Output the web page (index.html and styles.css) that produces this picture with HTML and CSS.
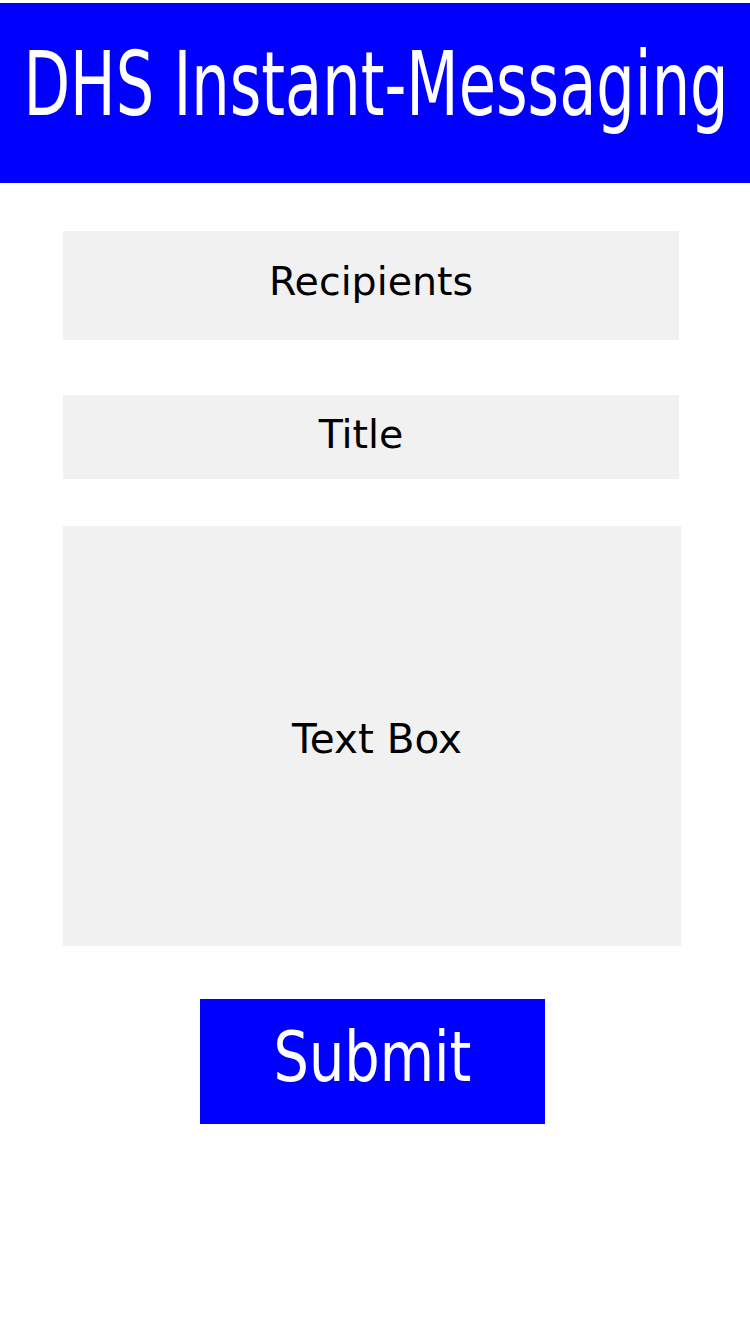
FILE: index.html
```html
<!DOCTYPE html>
<html lang="en">
<head>
<meta charset="utf-8">
<title>DHS Instant-Messaging</title>
<link rel="stylesheet" href="styles.css">
</head>
<body>
  <header class="app-header">
    <h1 class="app-title">DHS Instant-Messaging</h1>
  </header>
  <main class="compose">
    <div class="field field-recipients"><span class="field-label">Recipients</span></div>
    <div class="field field-title"><span class="field-label">Title</span></div>
    <div class="field field-body"><span class="field-label field-label-lg">Text Box</span></div>
    <div class="submit-btn"><span class="submit-label">Submit</span></div>
  </main>
</body>
</html>
```
FILE: styles.css
```css
* { box-sizing: border-box; }

html, body {
  margin: 0;
  padding: 0;
  background: #ffffff;
}

body {
  padding-top: 3px;
  font-family: "DejaVu Sans", Verdana, sans-serif;
  width: 750px;
  height: 1334px;
  overflow: hidden;
}

.app-header {
  height: 180px;
  background: #0000ff;
  display: flex;
  justify-content: center;
  align-items: flex-start;
  padding-top: 55px;
  padding-left: 2px;
}

.app-title {
  margin: 0;
  font-family: "DejaVu Sans Condensed", "DejaVu Sans", sans-serif;
  font-stretch: condensed;
  font-weight: normal;
  font-size: 67.4px;
  line-height: 67px;
  color: #ffffff;
  white-space: nowrap;
  transform: scaleY(1.32);
  transform-origin: 50% 56.7px;
}

.compose {
  display: flex;
  flex-direction: column;
  align-items: flex-start;
}

.field {
  background: #f1f1f1;
  margin-left: 63px;
  width: 616px;
  text-align: center;
  color: #000000;
}

.field-label {
  display: inline-block;
  font-size: 39.5px;
  line-height: 39px;
}

.field-label-lg {
  font-size: 40.5px;
  line-height: 40px;
}

.field-recipients {
  margin-top: 48px;
  height: 109px;
  padding-top: 31px;
}

.field-title {
  margin-top: 55px;
  height: 84px;
  padding-top: 20px;
  padding-right: 20px;
}

.field-body {
  margin-top: 47px;
  width: 618px;
  height: 420px;
  padding-top: 193px;
  padding-left: 10px;
}

.submit-btn {
  margin-top: 53px;
  margin-left: 200px;
  width: 345px;
  height: 125px;
  background: #0000ff;
  display: flex;
  justify-content: center;
  align-items: flex-start;
  padding-top: 30px;
}

.submit-label {
  font-family: "DejaVu Sans Condensed", "DejaVu Sans", sans-serif;
  font-stretch: condensed;
  font-size: 62px;
  line-height: 62px;
  color: #ffffff;
  transform: scaleY(1.11);
  transform-origin: 50% 52.5px;
}
```
